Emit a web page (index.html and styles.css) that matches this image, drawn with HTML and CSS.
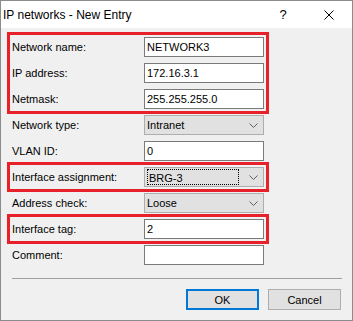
FILE: index.html
```html
<!DOCTYPE html>
<html lang="en">
<head>
  <meta charset="UTF-8" />
  <title>IP networks - New Entry</title>
  <link rel="stylesheet" href="styles.css">
</head>
<body>
  <div class="window">
    <div class="titlebar">
      <span class="title">IP networks - New Entry</span>
      <span class="caption-btn help">?</span>
      <span class="caption-btn close">
        <svg width="10" height="10" viewBox="0 0 10 10"><path d="M0.5 0.5 L9.5 9.5 M9.5 0.5 L0.5 9.5" stroke="#000" stroke-width="1" fill="none"/></svg>
      </span>
    </div>

    <div class="form">
      <div class="group marked">
        <div class="row"><label>Network name:</label><div class="input">NETWORK3</div></div>
        <div class="row"><label>IP address:</label><div class="input">172.16.3.1</div></div>
        <div class="row"><label>Netmask:</label><div class="input">255.255.255.0</div></div>
      </div>
      <div class="row"><label>Network type:</label><div class="select"><span>Intranet</span><svg class="chevron" width="9" height="5" viewBox="0 0 9 5"><path d="M0.5 0.5 L4.5 4.5 L8.5 0.5" stroke="#606060" fill="none"/></svg></div></div>
      <div class="row"><label>VLAN ID:</label><div class="input">0</div></div>
      <div class="group marked">
        <div class="row"><label>Interface assignment:</label><div class="select"><span class="focus-ring">BRG-3</span><svg class="chevron" width="9" height="5" viewBox="0 0 9 5"><path d="M0.5 0.5 L4.5 4.5 L8.5 0.5" stroke="#606060" fill="none"/></svg></div></div>
      </div>
      <div class="row"><label>Address check:</label><div class="select"><span>Loose</span><svg class="chevron" width="9" height="5" viewBox="0 0 9 5"><path d="M0.5 0.5 L4.5 4.5 L8.5 0.5" stroke="#606060" fill="none"/></svg></div></div>
      <div class="group marked">
        <div class="row"><label>Interface tag:</label><div class="input">2</div></div>
      </div>
      <div class="row"><label>Comment:</label><div class="input"></div></div>
    </div>

    <div class="separator"></div>

    <div class="buttons">
      <button class="btn default">OK</button>
      <button class="btn">Cancel</button>
    </div>
  </div>
</body>
</html>
```

FILE: styles.css
```css
* {
  margin: 0;
  padding: 0;
  box-sizing: border-box;
}

body {
  font-family: 'Liberation Sans', Arial, sans-serif;
  font-size: 11px;
  color: #000;
  background: #f0f0f0;
}

.window {
  width: 353px;
  height: 321px;
  border: 1px solid #8c8c8c;
  background: #f0f0f0;
}

.titlebar {
  display: flex;
  align-items: center;
  height: 27px;
  background: #fff;
}

.title {
  flex: 1;
  font-size: 12px;
  padding-left: 2px;
}

.caption-btn {
  width: 46px;
  height: 27px;
  display: flex;
  align-items: center;
  justify-content: center;
}

.help {
  font-size: 13px;
}

.form {
  display: flex;
  flex-direction: column;
  gap: 6px;
  padding: 9px 0 0 11px;
}

.group {
  display: flex;
  flex-direction: column;
  gap: 6px;
  width: 252px;
}

.marked {
  outline: 3px solid #e8202a;
  outline-offset: 2px;
}

.row {
  display: grid;
  grid-template-columns: 132px 120px;
  height: 20px;
  align-items: center;
}

.input {
  height: 20px;
  background: #fff;
  border: 1px solid #7a7a7a;
  padding-left: 2px;
  line-height: 18px;
}

.select {
  height: 20px;
  background: #e1e1e1;
  border: 1px solid #adadad;
  display: flex;
  align-items: center;
  padding-left: 2px;
  gap: 6px;
  padding-right: 5px;
}

.select span {
  flex: 1;
  line-height: 16px;
}

.focus-ring {
  border: 1px dotted #000;
  height: 16px;
  padding-left: 1px;
  margin-right: 4px;
}

.chevron {
  flex: none;
}

.separator {
  margin: 13px 10px 0 11px;
  height: 1px;
  background: #a0a0a0;
}

.buttons {
  display: flex;
  justify-content: flex-end;
  gap: 9px;
  margin-top: 10px;
  padding-right: 11px;
}

.btn {
  width: 73px;
  height: 21px;
  font-family: inherit;
  font-size: 11px;
  background: #e1e1e1;
  border: 1px solid #adadad;
  color: #000;
}

.btn.default {
  border: 2px solid #0078d7;
}
```
